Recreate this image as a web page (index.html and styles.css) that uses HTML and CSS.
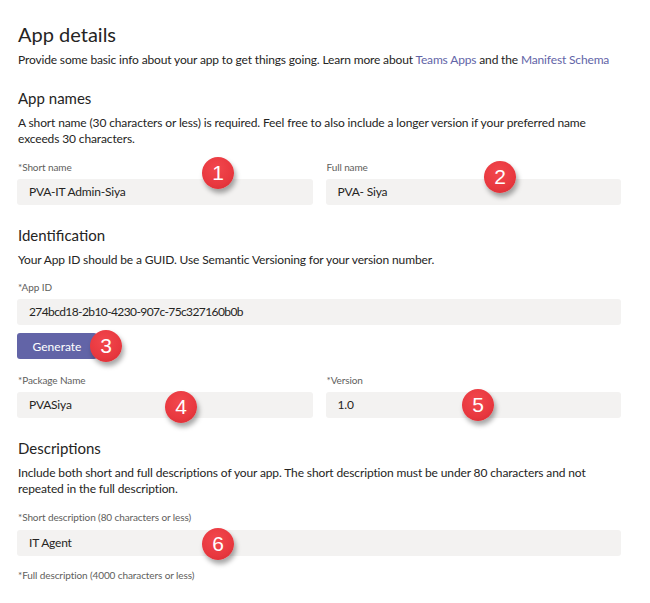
FILE: index.html
```html
<!DOCTYPE html>
<html>

<head>
  <link rel="stylesheet" href="styles.css">
</head>

<body>
  <div class="page">
    <h1>App details</h1>
    <p class="intro">Provide some basic info about your app to get things going. Learn more about <a href="#">Teams Apps</a> and the <a href="#">Manifest Schema</a></p>

    <h2 class="section-title">App names</h2>
    <p class="section-desc">A short name (30 characters or less) is required. Feel free to also include a longer version if your preferred name exceeds 30 characters.</p>
    <div class="field-row">
      <div class="field">
        <div class="field-label">*Short name</div>
        <div class="field-input">PVA-IT Admin-Siya</div>
      </div>
      <div class="field">
        <div class="field-label">Full name</div>
        <div class="field-input">PVA- Siya</div>
      </div>
    </div>

    <h2 class="section-title">Identification</h2>
    <p class="section-desc">Your App ID should be a GUID. Use Semantic Versioning for your version number.</p>
    <div class="field field-wide">
      <div class="field-label">*App ID</div>
      <div class="field-input field-guid">274bcd18-2b10-4230-907c-75c327160b0b</div>
    </div>
    <button class="btn-generate">Generate</button>
    <div class="field-row row-package">
      <div class="field">
        <div class="field-label">*Package Name</div>
        <div class="field-input">PVASiya</div>
      </div>
      <div class="field">
        <div class="field-label">*Version</div>
        <div class="field-input">1.0</div>
      </div>
    </div>

    <h2 class="section-title">Descriptions</h2>
    <p class="section-desc">Include both short and full descriptions of your app. The short description must be under 80 characters and not repeated in the full description.</p>
    <div class="field field-wide field-desc">
      <div class="field-label">*Short description (80 characters or less)</div>
      <div class="field-input">IT Agent</div>
    </div>
    <div class="field-label label-last">*Full description (4000 characters or less)</div>

    <!-- numbered callouts -->
    <span class="badge b1">1</span>
    <span class="badge b2">2</span>
    <span class="badge b3">3</span>
    <span class="badge b4">4</span>
    <span class="badge b5">5</span>
    <span class="badge b6">6</span>
  </div>
</body>

</html>
```

FILE: styles.css
```css
:root {
  --text: #252423;
  --label: #605e5c;
  --link: #6264a7;
  --input-bg: #f3f2f1;
  --brand: #6264a7;
  --badge: #e8383f;
}

* {
  margin: 0;
  padding: 0;
  box-sizing: border-box;
}

body {
  background: #ffffff;
  color: var(--text);
  font-family: 'Lato', 'Noto Sans', Arial, sans-serif;
}

.page {
  position: relative;
  width: 650px;
  padding: 22px 20px 0 17px;
}

h1 {
  font-size: 20px;
  font-weight: 400;
  line-height: 24px;
  padding-left: 1px;
}

.intro {
  margin-top: 6px;
  font-size: 12px;
  line-height: 16px;
  letter-spacing: -0.15px;
  padding-left: 1px;
  white-space: nowrap;
}

.intro a {
  color: var(--link);
  text-decoration: none;
}

.section-title {
  margin-top: 20px;
  font-size: 15px;
  font-weight: 400;
  line-height: 20px;
  padding-left: 1px;
}

.section-desc {
  margin-top: 7px;
  max-width: 590px;
  font-size: 12px;
  line-height: 16px;
  letter-spacing: -0.13px;
  padding-left: 1px;
}

.field-row {
  display: flex;
  gap: 13px;
  width: 604px;
  margin-top: 13px;
}

.field {
  flex: 1;
}

.field-wide {
  width: 604px;
  margin-top: 12px;
}

.field-desc {
  margin-top: 13px;
}

.field-desc .field-input {
  margin-top: 6px;
}

.field-label {
  font-size: 10px;
  line-height: 14px;
  color: var(--label);
  letter-spacing: -0.1px;
  padding-left: 1px;
}

.field-input {
  margin-top: 5px;
  height: 26px;
  line-height: 26px;
  padding-left: 12px;
  background: var(--input-bg);
  border-radius: 3px;
  font-size: 12px;
  letter-spacing: -0.2px;
  color: var(--text);
}

.field-guid {
  letter-spacing: -0.6px;
}

.btn-generate {
  display: block;
  margin-top: 8px;
  width: 80px;
  height: 26px;
  border: none;
  border-radius: 3px;
  background: var(--brand);
  color: #ffffff;
  font-family: inherit;
  font-size: 12px;
}

.row-package {
  margin-top: 14px;
}

.label-last {
  margin-top: 12px;
}

.badge {
  position: absolute;
  width: 32px;
  height: 32px;
  border-radius: 50%;
  background: radial-gradient(circle at 45% 35%, #f2474d 0%, var(--badge) 60%, #d42a31 100%);
  color: #ffffff;
  font-family: 'Liberation Sans', Arial, sans-serif;
  font-size: 21px;
  line-height: 32px;
  text-align: center;
  box-shadow: 2px 4px 5px rgba(0, 0, 0, 0.35);
}

.b1 { left: 202px; top: 157px; }
.b2 { left: 484px; top: 161px; }
.b3 { left: 90px; top: 330px; }
.b4 { left: 165px; top: 391px; }
.b5 { left: 462px; top: 389px; }
.b6 { left: 202px; top: 528px; }
```
